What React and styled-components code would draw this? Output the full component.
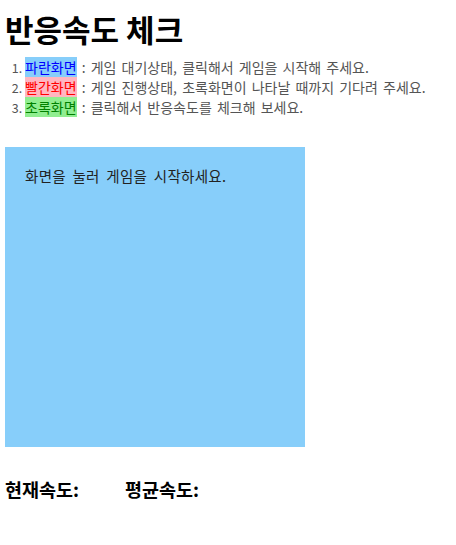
import React from 'react';
import styled, { createGlobalStyle } from 'styled-components';

const GlobalStyle = createGlobalStyle`
    body {
        margin: 0;
        background: #fff;
        font-family: "Noto Sans CJK KR", "Noto Sans", sans-serif;
    }
`;

const Page = styled.div`
    padding: 0 5px;
`;

const Title = styled.h1`
    margin: 0;
    padding-top: 11px;
    font-size: 31px;
    line-height: 36px;
    font-weight: 700;
    color: #000;
`;

const Guide = styled.ol`
    margin: 10px 0 0;
    padding-left: 20px;
    font-size: 14px;
    line-height: 20px;
    color: #555;

    li::marker {
        font-size: 12.5px;
    }
`;

const Line = styled.span`
    word-spacing: 2px;
`;

const Tag = styled.span`
    background: ${p => p.$bg};
    color: ${p => p.$fg};
`;

const Screen = styled.div`
    margin-top: 30px;
    width: 300px;
    height: 300px;
    box-sizing: border-box;
    padding: 20px;
    background: #87cefa;
    font-size: 14.5px;
    line-height: 18px;
    letter-spacing: 0.3px;
    word-spacing: 3px;
    color: #222;
    cursor: pointer;
    user-select: none;
`;

const Result = styled.div`
    display: flex;
    margin-top: 30px;
`;

const Stat = styled.div`
    width: 120px;
    font-size: 18.5px;
    line-height: 24px;
    font-weight: 700;
    color: #000;
`;

const guide = [
    { label: '파란화면', bg: '#87cefa', fg: '#0000ff', text: '게임 대기상태, 클릭해서 게임을 시작해 주세요.' },
    { label: '빨간화면', bg: '#ffb6c1', fg: '#ff0000', text: '게임 진행상태, 초록화면이 나타날 때까지 기다려 주세요.' },
    { label: '초록화면', bg: '#90ee90', fg: '#008000', text: '클릭해서 반응속도를 체크해 보세요.' },
];

export default function App() {
    return (
        <Page>
            <GlobalStyle />
            <Title>반응속도 체크</Title>
            <Guide>
                {guide.map(g => (
                    <li key={g.label}>
                        <Line><Tag $bg={g.bg} $fg={g.fg}>{g.label}</Tag> : {g.text}</Line>
                    </li>
                ))}
            </Guide>
            <Screen>화면을 눌러 게임을 시작하세요.</Screen>
            <Result>
                <Stat>현재속도:</Stat>
                <Stat>평균속도:</Stat>
            </Result>
        </Page>
    );
}
